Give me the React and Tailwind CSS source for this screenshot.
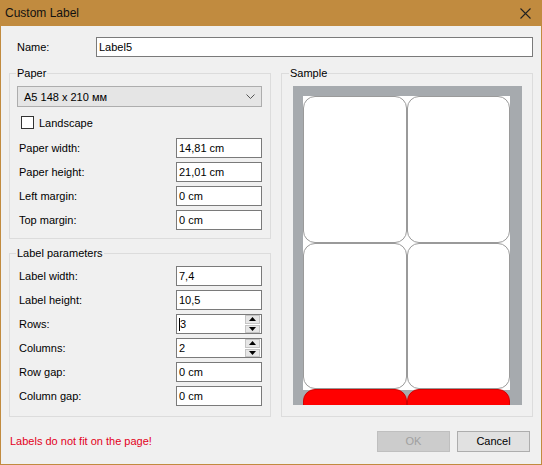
import React from "react";

function Field({ label, value, spin, caret }) {
  return (
    <div className="flex items-center h-[20px]">
      <div className="w-[159px] pl-[2px] pt-[1px]">{label}</div>
      <div className="w-[86px] h-[20px] border border-[#7a7a7a] bg-white flex items-center">
        <div className="flex-1 pl-[2px] pt-[1px] flex items-center">
          {caret && <span className="w-[1px] h-[13px] bg-black"></span>}
          <span>{value}</span>
        </div>
        {spin && (
          <div className="w-[16px] h-[18px] flex flex-col gap-[1px] pr-[1px]">
            <div className="flex-1 bg-[#e6e6e6] border border-[#c4c4c4] flex items-center justify-center">
              <svg width="7" height="4" viewBox="0 0 7 4"><polygon points="0,4 7,4 3.5,0" fill="#000" /></svg>
            </div>
            <div className="flex-1 bg-[#e6e6e6] border border-[#c4c4c4] flex items-center justify-center">
              <svg width="7" height="4" viewBox="0 0 7 4"><polygon points="0,0 7,0 3.5,4" fill="#000" /></svg>
            </div>
          </div>
        )}
      </div>
    </div>
  );
}

function Group({ title, className, children }) {
  return (
    <fieldset className={"border border-[#dcdcdc] pl-[7px] pr-[8px] " + className}>
      <legend className="px-[1px] -ml-[1px] leading-[16px]">{title}</legend>
      {children}
    </fieldset>
  );
}

function SampleLabel({ red }) {
  return (
    <div
      className={
        red
          ? "rounded-[12px] bg-[#ff0000] border border-[#d40000]"
          : "rounded-[12px] bg-white border-[1.5px] border-[#9a9a9a]"
      }
    ></div>
  );
}

export default function App() {
  return (
    <div className="w-[542px] h-[465px] bg-[#f0f0f0] flex flex-col border-x border-b border-[#c18b3f] text-[11px] text-black font-['Liberation_Sans',Arial,sans-serif]">
      <div className="h-[26px] shrink-0 bg-[#c18b3f] flex items-center justify-between pl-[4px] pr-[10px]">
        <span className="text-[12px] text-[#111]">Custom Label</span>
        <svg width="11" height="11" viewBox="0 0 11 11">
          <path d="M0.5 0.5 L10.5 10.5 M10.5 0.5 L0.5 10.5" stroke="#222" strokeWidth="1.1" />
        </svg>
      </div>
      <div className="flex-1 flex flex-col px-[8px] pt-[11px]">
        <div className="flex items-center h-[20px]">
          <div className="w-[87px] pl-[8px] pt-[1px]">Name:</div>
          <div className="flex-1 h-[20px] border border-[#7a7a7a] bg-white flex items-center pl-[2px] pt-[1px]">Label5</div>
        </div>
        <div className="flex gap-[10px] mt-[8px]">
          <div className="w-[262px] flex flex-col gap-[6px]">
            <Group title="Paper" className="h-[174px]">
              <div className="mt-[5px] h-[21px] bg-[#e5e5e5] border border-[#adadad] flex items-center justify-between pl-[6px] pr-[6px]">
                <span className="pt-[1px]">A5 148 x 210 мм</span>
                <svg width="9" height="5" viewBox="0 0 9 5">
                  <polyline points="0.5,0.5 4.5,4.5 8.5,0.5" fill="none" stroke="#555" strokeWidth="1" />
                </svg>
              </div>
              <div className="mt-[9px] ml-[4px] flex items-center h-[13px]">
                <div className="w-[13px] h-[13px] border border-[#333] bg-white"></div>
                <span className="ml-[5px] pt-[1px]">Landscape</span>
              </div>
              <div className="mt-[9px] flex flex-col gap-[4px]">
                <Field label="Paper width:" value="14,81 cm" />
                <Field label="Paper height:" value="21,01 cm" />
                <Field label="Left margin:" value="0 cm" />
                <Field label="Top margin:" value="0 cm" />
              </div>
            </Group>
            <Group title="Label parameters" className="h-[172px]">
              <div className="mt-[5px] flex flex-col gap-[4px]">
                <Field label="Label width:" value="7,4" />
                <Field label="Label height:" value="10,5" />
                <Field label="Rows:" value="3" spin caret />
                <Field label="Columns:" value="2" spin />
                <Field label="Row gap:" value="0 cm" />
                <Field label="Column gap:" value="0 cm" />
              </div>
            </Group>
          </div>
          <fieldset className="w-[253px] h-[352px] border border-[#dcdcdc] pl-[11px]">
            <legend className="px-[1px] -ml-[4px] leading-[16px]">Sample</legend>
            <div className="mt-[5px] w-[229px] h-[319px] bg-[#a6aaae] overflow-hidden pt-[10px] pl-[10px]">
              <div className="w-[207px] h-[294px] bg-white">
                <div className="grid grid-cols-2 grid-rows-[147px_146px_147px] w-[207px]">
                  <SampleLabel />
                  <SampleLabel />
                  <SampleLabel />
                  <SampleLabel />
                  <SampleLabel red />
                  <SampleLabel red />
                </div>
              </div>
            </div>
          </fieldset>
        </div>
        <div className="mt-[14px] h-[21px] flex items-center justify-between">
          <span className="pl-[1px] text-[#e3001b]">Labels do not fit on the page!</span>
          <div className="flex gap-[7px] mr-[3px]">
            <div className="w-[73px] h-[21px] bg-[#cccccc] border border-[#bfbfbf] flex items-center justify-center text-[#a0a0a0]">OK</div>
            <div className="w-[73px] h-[21px] bg-[#e1e1e1] border border-[#adadad] flex items-center justify-center">Cancel</div>
          </div>
        </div>
      </div>
    </div>
  );
}
